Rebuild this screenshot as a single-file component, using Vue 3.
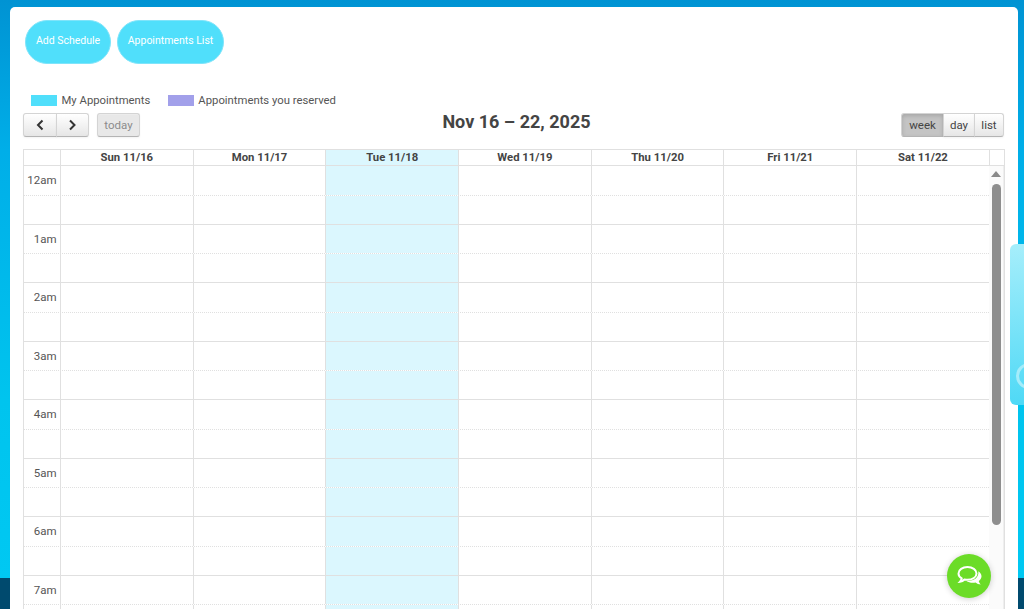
<script setup>
const days = ['Sun 11/16', 'Mon 11/17', 'Tue 11/18', 'Wed 11/19', 'Thu 11/20', 'Fri 11/21', 'Sat 11/22']
const hours = ['12am', '1am', '2am', '3am', '4am', '5am', '6am', '7am']
const todayIndex = 2

const slots = []
for (const hour of hours) {
  slots.push({ label: hour, major: false })
  slots.push({ label: '', major: true })
}
</script>

<template>
  <div class="page">
    <div class="footer-band"></div>
    <main class="card">
      <div class="actions">
        <button class="pill add">Add Schedule</button>
        <button class="pill list">Appointments List</button>
      </div>

      <div class="legend">
        <span class="swatch mine"></span>
        <span class="legend-label first">My Appointments</span>
        <span class="swatch reserved"></span>
        <span class="legend-label">Appointments you reserved</span>
      </div>

      <div class="toolbar">
        <div class="tb-left">
          <div class="btn-group">
            <button class="btn arrow">
              <svg width="10" height="12" viewBox="0 0 10 12"><path d="M7.500 1.500 3 6l4.500 4.500" fill="none" stroke="#333" stroke-width="2" /></svg>
            </button>
            <button class="btn arrow">
              <svg width="10" height="12" viewBox="0 0 10 12"><path d="M3 1.500 7.500 6 3 10.500" fill="none" stroke="#333" stroke-width="2" /></svg>
            </button>
          </div>
          <button class="btn today" disabled>today</button>
        </div>
        <h2 class="title">Nov 16 – 22, 2025</h2>
        <div class="btn-group views">
          <button class="btn view active">week</button>
          <button class="btn view">day</button>
          <button class="btn view last">list</button>
        </div>
      </div>

      <div class="calendar">
        <div class="head">
          <div class="axis-head"></div>
          <div v-for="(day, i) in days" :key="day" class="day-head" :class="{ today: i === todayIndex }">{{ day }}</div>
          <div class="gutter"></div>
        </div>
        <div class="body">
          <div class="slots">
            <div v-for="(slot, n) in slots" :key="n" class="slot" :class="{ major: slot.major }">
              <div class="axis">{{ slot.label }}</div>
              <div v-for="(day, i) in days" :key="day" class="cell" :class="{ today: i === todayIndex }"></div>
            </div>
          </div>
          <div class="scrollbar">
            <span class="scroll-up"></span>
            <span class="scroll-thumb"></span>
          </div>
        </div>
      </div>
    </main>

    <div class="side-tab"><span class="side-ring"></span></div>

    <button class="chat" aria-label="Chat">
      <svg width="30" height="30" viewBox="0 0 30 30">
        <path d="M13.500 6c-5 0-9 2.800-9 6.400 0 2 1.300 3.800 3.200 5-.3 1.400-1 2.500-1.800 3.400 1.800-.2 3.400-1 4.600-2.300 1 .2 2 .3 3 .3 5 0 9-2.800 9-6.400S18.500 6 13.500 6z" fill="none" stroke="#fff" stroke-width="2" />
        <path d="M24.300 10.300c1.900 1.200 3.200 3 3.200 5 0 1.900-1 3.500-2.700 4.700.2 1.300.9 2.500 2 3.500-2.100-.2-3.900-1-5.200-2.100-.9.200-1.900.3-2.900.3-2.400 0-4.600-.7-6.200-1.800 6.800.5 12.800-3 11.800-9.600z" fill="#fff" />
      </svg>
    </button>
  </div>
</template>

<style scoped>
.page {
  position: relative;
  width: 1024px;
  height: 609px;
  overflow: hidden;
  padding: 7px 6px 0 10px;
  box-sizing: border-box;
  background: linear-gradient(180deg, #0093d3 0, #00aee8 150px, #00c4ee 400px, #00c8f2 578px);
  font-family: Roboto, "Liberation Sans", sans-serif;
  color: #444;
}

.footer-band {
  position: absolute;
  left: 0;
  right: 0;
  top: 578px;
  bottom: 0;
  background: #004a6e;
}

.card {
  position: relative;
  height: 640px;
  box-sizing: border-box;
  padding: 13px 14px 0 13px;
  background: #fff;
  border-radius: 5px 5px 0 0;
}

.actions {
  display: flex;
  gap: 6px;
  padding-left: 2px;
}

.pill {
  height: 44px;
  border: 1px solid #7fe4fa;
  border-radius: 22px;
  background: #50dffb;
  color: #fff;
  font: 400 10.500px Roboto, sans-serif;
  padding: 0 0 3px;
}

.pill.add { width: 86px; }
.pill.list { width: 107px; }

.legend {
  display: flex;
  align-items: center;
  height: 13px;
  margin-top: 30px;
  padding-left: 8px;
  font-size: 11.300px;
  color: #555;
}

.swatch {
  width: 26px;
  height: 11px;
  margin-right: 4.500px;
}

.swatch.mine { background: #50dffb; }
.swatch.reserved { background: #a2a0ea; margin-right: 4px; }
.legend-label.first { margin-right: 18px; }

.toolbar {
  position: relative;
  display: flex;
  align-items: flex-start;
  justify-content: space-between;
  height: 36px;
  margin-top: 6px;
}

.tb-left {
  display: flex;
  gap: 8px;
}

.btn-group {
  display: flex;
}

.btn {
  height: 24px;
  padding: 0;
  border: 1px solid #d4d4d4;
  border-bottom-color: #b4b4b4;
  background: linear-gradient(180deg, #fff, #e6e6e6);
  color: #444;
  font: 400 11.500px Roboto, sans-serif;
  box-shadow: inset 0 1px 0 rgba(255, 255, 255, .2), 0 1px 2px rgba(0, 0, 0, .05);
}

.btn.arrow {
  width: 33.500px;
  display: flex;
  align-items: center;
  justify-content: center;
}

.btn-group .btn:first-child { border-radius: 3px 0 0 3px; }
.btn-group .btn:last-child { border-radius: 0 3px 3px 0; margin-left: -1px; }

.btn.today {
  width: 43px;
  border-radius: 3px;
  background: #e8e8e8;
  color: #8c8c8c;
}

.title {
  position: absolute;
  left: 6px;
  right: 0;
  top: -2px;
  margin: 0;
  text-align: center;
  font-size: 18px;
  line-height: 22px;
  font-weight: 700;
  color: #444;
  pointer-events: none;
}

.btn.view { width: 32px; margin-left: -1px; }
.btn.view:first-child { width: 43px; margin-left: 0; }
.btn.view.last { width: 30px; }
.btn.view.active {
  background: #c4c4c4;
  box-shadow: inset 0 2px 4px rgba(0, 0, 0, .15);
}

.calendar {
  width: 982px;
  box-sizing: border-box;
  border: 1px solid #e0e0e0;
  border-bottom: 0;
}

.head {
  display: flex;
  height: 15.400px;
  border-bottom: 1px solid #e0e0e0;
}

.axis-head { width: 36px; flex: none; }

.day-head {
  flex: 0 0 132.700px;
  box-sizing: border-box;
  border-left: 1px solid #e0e0e0;
  text-align: center;
  font-size: 11.300px;
  line-height: 15px;
  font-weight: 700;
  color: #444;
}

.day-head.today, .cell.today { background: #dbf7fe; }

.gutter {
  flex: 1;
  border-left: 1px solid #e0e0e0;
}

.body {
  display: flex;
}

.slots {
  width: 965px;
  flex: none;
}

.slot {
  display: flex;
  height: 29.250px;
  box-sizing: border-box;
  border-bottom: 1px dotted #e0e0e0;
}

.slot.major { border-bottom-style: solid; }

.axis {
  width: 36px;
  flex: none;
  box-sizing: border-box;
  padding: 7px 3.500px 0 0;
  text-align: right;
  font-size: 11.500px;
  line-height: 14px;
  color: #555;
}

.cell {
  flex: 0 0 132.700px;
  box-sizing: border-box;
  border-left: 1px solid #e0e0e0;
}

.scrollbar {
  position: relative;
  flex: 1;
  background: #fbfbfb;
  border-right: 1px solid #eee;
}

.scroll-up {
  position: absolute;
  left: 2px;
  top: 5px;
  width: 0;
  height: 0;
  border-left: 5px solid transparent;
  border-right: 5px solid transparent;
  border-bottom: 6px solid #8a8a8a;
}

.scroll-thumb {
  position: absolute;
  left: 2.500px;
  top: 17.600px;
  width: 9px;
  height: 341px;
  border-radius: 5px;
  background: #8e8e8e;
}

.side-tab {
  position: absolute;
  left: 1010px;
  top: 244px;
  width: 14px;
  height: 161px;
  overflow: hidden;
  border-radius: 6px 0 0 6px;
  background: linear-gradient(180deg, #a6eefb, #4fd9f6);
}

.side-ring {
  position: absolute;
  left: 6px;
  top: 119px;
  width: 26px;
  height: 26px;
  box-sizing: border-box;
  border: 3px solid #a5ecfa;
  border-radius: 50%;
}

.chat {
  position: absolute;
  left: 947px;
  top: 554px;
  width: 44px;
  height: 44px;
  padding: 7px;
  border: 0;
  border-radius: 50%;
  background: #6bdc27;
  box-shadow: 0 1px 6px rgba(0, 0, 0, .2);
}

.chat svg { display: block; }
</style>

<style>
html, body { margin: 0; overflow: hidden; }
</style>
